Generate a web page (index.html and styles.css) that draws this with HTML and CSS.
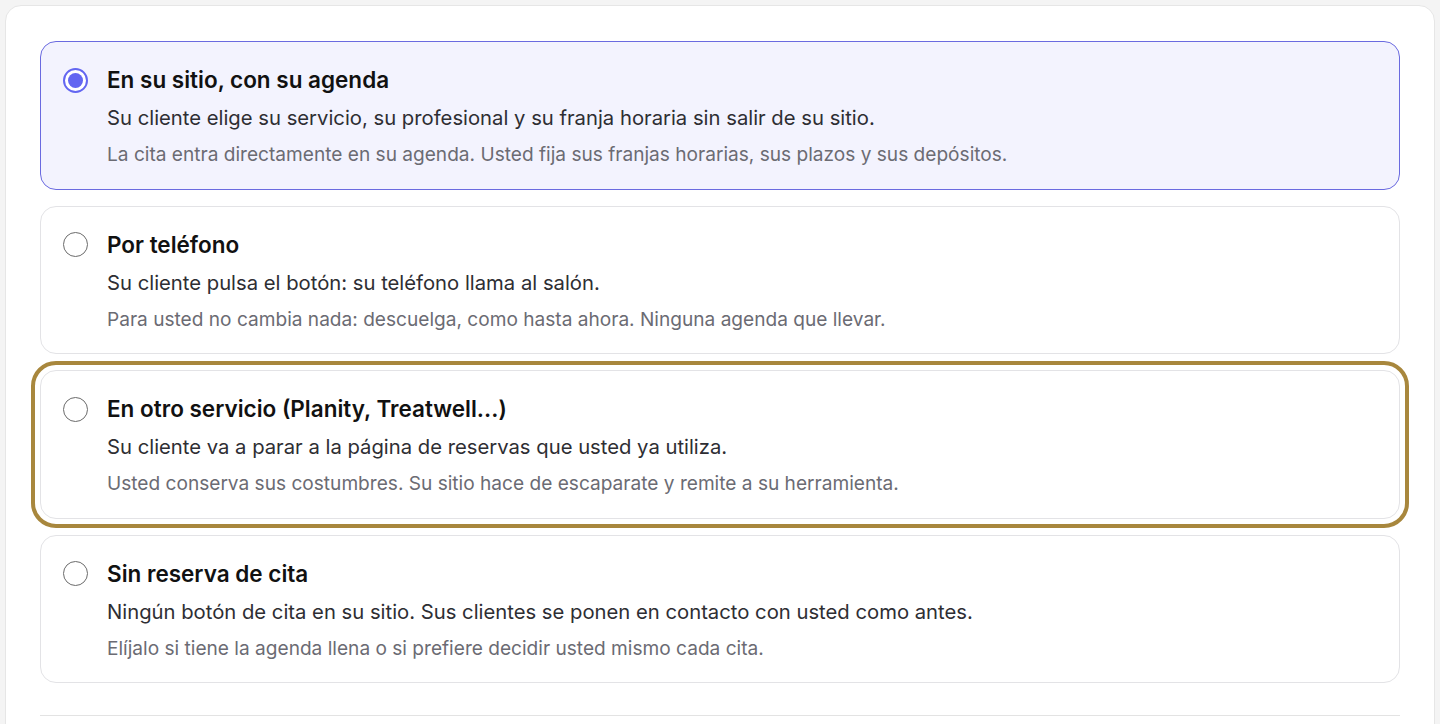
FILE: index.html
```html
<!DOCTYPE html>
<html lang="es">
<head>
<meta charset="utf-8">
<title>Reserva de cita</title>
<link rel="stylesheet" href="styles.css">
</head>
<body>
<div class="panel">
  <div class="options">
    <label class="option selected">
      <span class="radio checked"></span>
      <span class="text">
        <span class="title">En su sitio, con su agenda</span>
        <span class="desc">Su cliente elige su servicio, su profesional y su franja horaria sin salir de su sitio.</span>
        <span class="note">La cita entra directamente en su agenda. Usted fija sus franjas horarias, sus plazos y sus depósitos.</span>
      </span>
    </label>
    <label class="option">
      <span class="radio"></span>
      <span class="text">
        <span class="title">Por teléfono</span>
        <span class="desc">Su cliente pulsa el botón: su teléfono llama al salón.</span>
        <span class="note">Para usted no cambia nada: descuelga, como hasta ahora. Ninguna agenda que llevar.</span>
      </span>
    </label>
    <label class="option focused">
      <span class="radio"></span>
      <span class="text">
        <span class="title">En otro servicio (Planity, Treatwell...)</span>
        <span class="desc">Su cliente va a parar a la página de reservas que usted ya utiliza.</span>
        <span class="note">Usted conserva sus costumbres. Su sitio hace de escaparate y remite a su herramienta.</span>
      </span>
    </label>
    <label class="option">
      <span class="radio"></span>
      <span class="text">
        <span class="title">Sin reserva de cita</span>
        <span class="desc">Ningún botón de cita en su sitio. Sus clientes se ponen en contacto con usted como antes.</span>
        <span class="note">Elíjalo si tiene la agenda llena o si prefiere decidir usted mismo cada cita.</span>
      </span>
    </label>
  </div>
  <hr class="divider">
</div>
</body>
</html>
```

FILE: styles.css
```css
html, body {
  margin: 0;
  padding: 0;
  background: #f4f4f4;
  font-family: Inter, "Noto Sans", sans-serif;
  height: 724px;
  overflow: hidden;
}

.panel {
  margin: 5px 5px 0 5px;
  background: #ffffff;
  border: 1px solid #e6e6e6;
  border-radius: 16px;
  padding: 35px 34px 40px 34px;
  min-height: 800px;
}

.options {
  display: flex;
  flex-direction: column;
  gap: 16px;
}

.option {
  display: flex;
  align-items: flex-start;
  gap: 19px;
  padding: 22px 23px 20.5px 22px;
  border: 1px solid #e3e3e6;
  border-radius: 16px;
  background: #ffffff;
  cursor: pointer;
}

.option.selected {
  background: #f3f3fe;
  border-color: #6a6ae0;
}

.option.focused {
  outline: 4px solid #a8873d;
  outline-offset: 5px;
}

.radio {
  flex: none;
  width: 25px;
  height: 25px;
  box-sizing: border-box;
  border: 1.5px solid #6b6b6b;
  border-radius: 50%;
  background: #ffffff;
  margin-top: 3.5px;
  display: flex;
  align-items: center;
  justify-content: center;
}

.radio.checked {
  border: 2px solid #6366f1;
}

.radio.checked::after {
  content: "";
  width: 15px;
  height: 15px;
  border-radius: 50%;
  background: #6366f1;
}

.text {
  display: flex;
  flex-direction: column;
}

.title {
  font-size: 22.5px;
  line-height: 32px;
  font-weight: 600;
  color: #111111;
  margin-bottom: 7px;
}

.desc {
  font-size: 20.25px;
  line-height: 30px;
  color: #2e2e33;
  margin-bottom: 7px;
}

.note {
  font-size: 19.1px;
  line-height: 28px;
  color: #6b6b73;
}

.divider {
  border: 0;
  border-top: 1px solid #e3e3e3;
  margin: 32px 0 0 0;
}
```
